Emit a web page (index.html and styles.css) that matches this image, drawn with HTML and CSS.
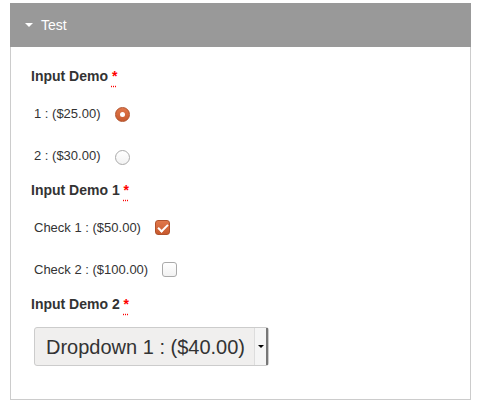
FILE: index.html
```html
<!DOCTYPE html>
<html>
<head>
  <title>Test</title>
  <link rel="stylesheet" href="styles.css">
</head>
<body>
  <div class="panel">
    <div class="panel-heading">
      <span class="caret"></span>
      <span class="panel-title">Test</span>
    </div>
    <div class="panel-body">
      <div class="group">
        <div class="group-label">Input Demo <abbr class="req" title="required">*</abbr></div>
        <label class="option">
          <span>1 : ($25.00)</span>
          <input type="radio" name="demo" class="radio" checked>
        </label>
        <label class="option">
          <span>2 : ($30.00)</span>
          <input type="radio" name="demo" class="radio">
        </label>
      </div>

      <div class="group">
        <div class="group-label">Input Demo 1 <abbr class="req" title="required">*</abbr></div>
        <label class="option">
          <span>Check 1 : ($50.00)</span>
          <input type="checkbox" class="check" checked>
        </label>
        <label class="option">
          <span>Check 2 : ($100.00)</span>
          <input type="checkbox" class="check">
        </label>
      </div>

      <div class="group">
        <div class="group-label">Input Demo 2 <abbr class="req" title="required">*</abbr></div>
        <div class="select-wrap">
          <select class="select">
            <option>Dropdown 1 : ($40.00)</option>
          </select>
          <span class="select-arrow"></span>
        </div>
      </div>
    </div>
  </div>
</body>
</html>
```

FILE: styles.css
```css
body {
  margin: 0;
  padding: 3px 10px 0;
  font-family: "Liberation Sans", Arial, sans-serif;
  color: #333;
  background: #fff;
}

.panel {
  width: 461px;
}

.panel-heading {
  background-color: #999;
  height: 44px;
  display: flex;
  align-items: center;
  padding-left: 15px;
}

.caret {
  width: 0;
  height: 0;
  border-left: 4px solid transparent;
  border-right: 4px solid transparent;
  border-top: 4px solid #fff;
  margin-right: 8px;
  margin-top: -1px;
}

.panel-title {
  color: #fff;
  font-size: 14px;
}

.panel-body {
  border: 1px solid #ccc;
  border-top: none;
  padding: 19px 20px 33px;
}

.group {
  margin-bottom: 4px;
}

.group:last-child {
  margin-bottom: 0;
}

.group-label {
  font-size: 14px;
  font-weight: bold;
  line-height: 20px;
  margin-bottom: 6px;
}

.req {
  color: #f00;
  text-decoration: underline dotted #f00;
  text-underline-offset: 5px;
  cursor: help;
}

.option {
  display: flex;
  align-items: center;
  height: 42px;
  padding-left: 3px;
  font-size: 13px;
  cursor: pointer;
}

.option span {
  margin-right: 14px;
}

.radio,
.check {
  appearance: none;
  -webkit-appearance: none;
  margin: 3px 0 0;
  width: 15px;
  height: 15px;
  border: 1px solid #aaa;
  background: linear-gradient(#fff, #f2f2f2);
  position: relative;
}

.radio {
  border-radius: 50%;
}

.option:last-child .radio {
  margin-top: 5px;
}

.check {
  border-radius: 3px;
  margin-top: 1px;
}

.radio:checked,
.check:checked {
  border-color: #b0522c;
  background: linear-gradient(#e0774a, #c85a2e);
}

.radio:checked:after {
  content: "";
  position: absolute;
  left: 4px;
  top: 4px;
  width: 5px;
  height: 5px;
  border-radius: 50%;
  background: #fff;
}

.check:checked:after {
  content: "";
  position: absolute;
  left: 4px;
  top: 1px;
  width: 4px;
  height: 8px;
  border: solid #fff;
  border-width: 0 2px 2px 0;
  transform: rotate(45deg);
}

.select-wrap {
  display: flex;
  width: 235px;
  margin: 13px 0 0 3px;
  height: 39px;
  border: 1px solid #ccc;
  border-radius: 3px;
  background: #f0efee;
  box-sizing: border-box;
}

.select {
  appearance: none;
  -webkit-appearance: none;
  flex: 1;
  border: none;
  background: transparent;
  font-family: "Liberation Sans", Arial, sans-serif;
  font-size: 20px;
  color: #333;
  padding: 0 8px 0 11px;
  outline: none;
}

.select-arrow {
  width: 11px;
  background: #f5f5f5;
  border-left: 1px solid #ddd;
  border-right: 2px solid #777;
  display: flex;
  align-items: center;
  justify-content: center;
}

.select-arrow:before {
  content: "";
  border-left: 3px solid transparent;
  border-right: 3px solid transparent;
  border-top: 3px solid #000;
}
```
